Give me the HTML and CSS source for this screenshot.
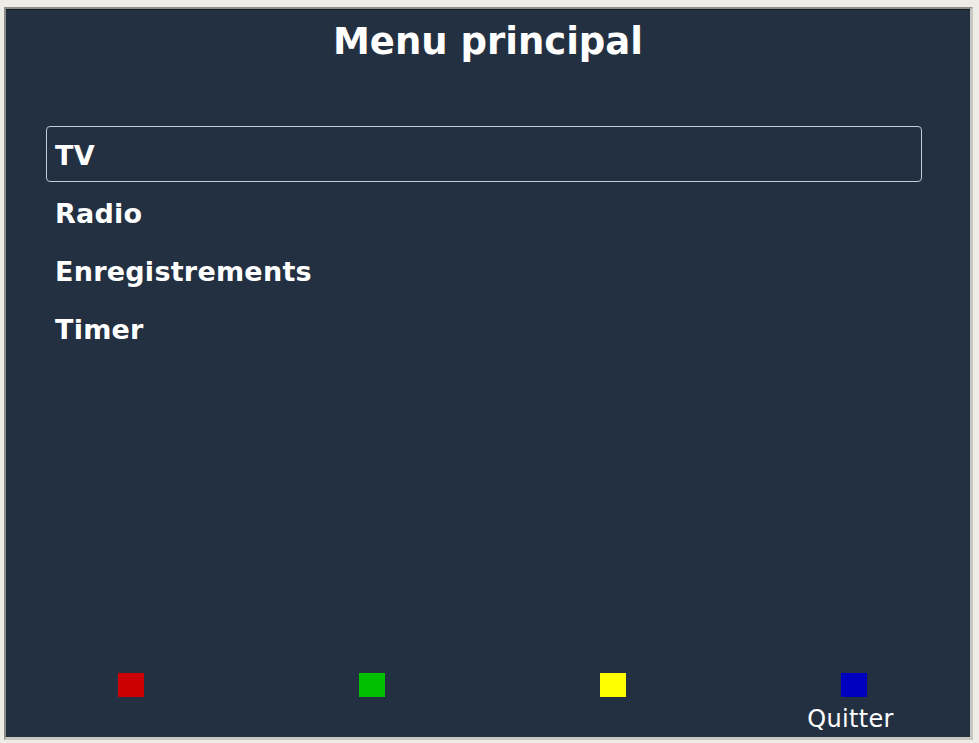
FILE: index.html
```html
<!DOCTYPE html>
<html>
<head>
<meta charset="utf-8">
<link rel="stylesheet" href="styles.css">
</head>
<body>
<div class="frame">
  <div class="screen">
    <h1 class="title">Menu principal</h1>
    <ul class="menu">
      <li class="item selected">TV</li>
      <li class="item">Radio</li>
      <li class="item">Enregistrements</li>
      <li class="item">Timer</li>
    </ul>
    <div class="spacer"></div>
    <div class="keys">
      <div class="key"><span class="sq red"></span><span class="label"></span></div>
      <div class="key"><span class="sq green"></span><span class="label"></span></div>
      <div class="key"><span class="sq yellow"></span><span class="label"></span></div>
      <div class="key"><span class="sq blue"></span><span class="label">Quitter</span></div>
    </div>
  </div>
</div>
</body>
</html>
```

FILE: styles.css
```css
html, body {
  margin: 0;
  padding: 0;
  background: #eeece7;
  width: 979px;
  height: 743px;
  overflow: hidden;
}
.frame {
  box-sizing: border-box;
  margin: 7px 6px 0 4px;
  width: 969px;
  height: 733px;
  border-style: solid;
  border-width: 2px 3px 3px 2px;
  border-color: #8f8d88 #c9c7c2 #c9c7c2 #8f8d88;
}
.screen {
  box-sizing: border-box;
  height: 100%;
  background: #233041;
  border-top: 1px solid #141c26;
  display: flex;
  flex-direction: column;
  font-family: "DejaVu Sans", Verdana, sans-serif;
  color: #ffffff;
}
.title {
  margin: 0;
  padding-top: 10px;
  font-size: 37px;
  line-height: 44px;
  font-weight: bold;
  text-align: center;
}
.menu {
  list-style: none;
  margin: 62px 48px 0 40px;
  padding: 0;
}
.item {
  box-sizing: border-box;
  height: 56px;
  margin-bottom: 2px;
  padding-left: 8px;
  font-size: 27px;
  font-weight: bold;
  line-height: 58px;
  letter-spacing: 0.25px;
  border: 1px solid transparent;
  border-radius: 4px;
}
.item.selected {
  border-color: #c3cdd8;
}
.spacer {
  flex: 1;
}
.keys {
  display: grid;
  grid-template-columns: repeat(4, 241px);
  padding-left: 4px;
}
.key {
  display: flex;
  flex-direction: column;
  align-items: center;
}
.sq {
  width: 26px;
  height: 24px;
}
.red { background: #cc0000; }
.green { background: #00c000; }
.yellow { background: #ffff00; }
.blue { background: #0000c0; }
.label {
  height: 40px;
  margin-right: 6px;
  font-size: 24px;
  line-height: 44px;
  letter-spacing: 0.3px;
}
```
